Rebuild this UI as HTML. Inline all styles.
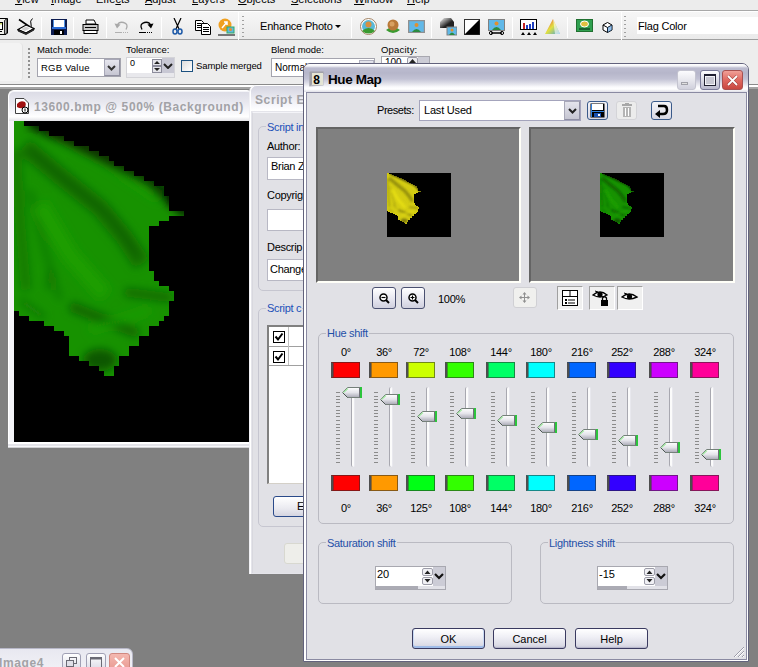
<!DOCTYPE html>
<html><head><meta charset="utf-8">
<style>
*{box-sizing:border-box;margin:0;padding:0}
html,body{width:758px;height:667px;overflow:hidden}
body{position:relative;background:#808080;font-family:"Liberation Sans",sans-serif;font-size:11px;color:#000}
.a{position:absolute}
.t{position:absolute;white-space:nowrap;line-height:13px}
/* top bars */
#menu{left:0;top:0;width:758px;height:11px;background:#ECECEC;border-bottom:1px solid #A8A8A8}
#tb1{left:0;top:11px;width:758px;height:29px;background:linear-gradient(#F6F6F6,#EAEAEA);border-top:1px solid #FFF;border-bottom:1px solid #A0A0A0}
#tb2{left:0;top:40px;width:758px;height:45px;background:#EDEDED;border-bottom:1px solid #8A8A8A}
#tb2b{left:0;top:85px;width:758px;height:4px;background:linear-gradient(#FFFFFF 0 2px,#A4A4A4 2px 4px)}
.sep{position:absolute;width:1px;background:#B8B8B8;border-right:1px solid #FFF}
.grip{position:absolute;width:2px;background:repeating-linear-gradient(#8A8A8A 0 2px,transparent 2px 4px)}
.sw{width:29px;height:16px;border:1px solid rgba(40,40,40,0.55);border-left:2px solid #4E4E4E;box-shadow:inset 1px 0 0 rgba(60,60,60,0.5)}
.tk{width:4px;height:71px}
.tr{width:4px;height:80px;background:#FBFBFB;border-left:1px solid #A8A8B0;border-right:1px solid #E8E8EE;border-radius:2px}
.btn{width:73px;height:21px;border:1px solid #3A3A60;border-radius:3px;background:linear-gradient(#FFFFFF,#F0F0F6 40%,#DCDCE6 85%,#C8C8D8);text-align:center;line-height:21px;font-size:11px;box-shadow:inset 0 -1px 0 #B8B8CC}
</style></head><body>

<!-- MENU -->
<div id="menu" class="a">
  <div class="t" style="left:15px;top:-7px;font-size:11px"><u>V</u>iew</div>
  <div class="t" style="left:51px;top:-7px;font-size:11px"><u>I</u>mage</div>
  <div class="t" style="left:96px;top:-7px;font-size:11px">Effe<u>c</u>ts</div>
  <div class="t" style="left:145px;top:-7px;font-size:11px"><u>A</u>djust</div>
  <div class="t" style="left:192px;top:-7px;font-size:11px"><u>L</u>ayers</div>
  <div class="t" style="left:238px;top:-7px;font-size:11px"><u>O</u>bjects</div>
  <div class="t" style="left:291px;top:-7px;font-size:11px"><u>S</u>elections</div>
  <div class="t" style="left:354px;top:-7px;font-size:11px"><u>W</u>indow</div>
  <div class="t" style="left:407px;top:-7px;font-size:11px"><u>H</u>elp</div>
</div>

<!-- TOOLBAR 1 -->
<div id="tb1" class="a">
  <!-- partial icon -->
  <svg class="a" style="left:0;top:6px" width="9" height="17"><path d="M-8 0.5 H7.5 V15 L6 16.5 H-8Z" fill="#F0F0EC" stroke="#000"/><path d="M4.5 2.5 L7 0.5 V15 L4.5 16.5Z" fill="#B0B0B0" stroke="#000" stroke-width="0.8"/><rect x="-6" y="4.5" width="8.5" height="7" fill="#fff" stroke="#000"/><rect x="-5" y="5" width="7" height="1.5" fill="#D0E070"/><path d="M-6 13.5 H2" stroke="#000"/></svg>
  <!-- scanner -->
  <svg class="a" style="left:17px;top:6px" width="18" height="17"><path d="M2 1.5 L13 9" stroke="#000" stroke-width="1.6"/><path d="M15.5 0.5 Q12.5 3 14 6 Q15 9 13 11" stroke="#000" fill="none"/><path d="M1 11.5 L9 7 L17 10.5 L9 15 Z" fill="#fff" stroke="#000" stroke-width="1.1"/><path d="M4 11 L9 8.5 L13 10.5 L8 13Z" fill="#D0D0D0"/><path d="M1 11.5 V13 L9 16.5 L17 12 V10.5 L9 15Z" fill="#404040" stroke="#000" stroke-width="0.8"/></svg>
  <div class="sep" style="left:41px;top:5px;height:21px"></div>
  <!-- floppy -->
  <svg class="a" style="left:51px;top:7px" width="16" height="16"><rect x="0" y="0" width="16" height="16" fill="#0C1C50"/><rect x="3" y="1" width="10" height="7" fill="#fff"/><rect x="2" y="1" width="1" height="7" fill="#5090E0"/><rect x="13" y="1" width="1" height="7" fill="#5090E0"/><rect x="1" y="8" width="14" height="2" fill="#2A6CD8"/><rect x="3" y="11" width="10" height="5" fill="#000"/><rect x="9" y="12" width="2" height="3" fill="#fff"/></svg>
  <div class="sep" style="left:73px;top:5px;height:21px"></div>
  <!-- printer -->
  <svg class="a" style="left:82px;top:7px" width="17" height="16"><path d="M4 1 L12 1 L14 5 L4 5 Z" fill="#fff" stroke="#000"/><rect x="1" y="5.5" width="15" height="6" fill="#C8C8C8" stroke="#000"/><rect x="2" y="11.5" width="13" height="3" fill="#fff" stroke="#000"/><rect x="3" y="8" width="11" height="1" fill="#000"/></svg>
  <div class="sep" style="left:106px;top:5px;height:21px"></div>
  <!-- undo disabled -->
  <svg class="a" style="left:114px;top:8px" width="16" height="14"><path d="M12 9.5 Q15 4 9.5 2.5 Q5 1.5 3.5 5" stroke="#A8A8A8" stroke-width="1.3" fill="none"/><path d="M0.5 3.5 L6.5 4.5 L3 8.5Z" fill="#A8A8A8"/><path d="M1 12.5 H8" stroke="#B0B0B0"/><path d="M9 12.5 H15" stroke="#B0B0B0" stroke-dasharray="1 1"/></svg>
  <!-- redo -->
  <svg class="a" style="left:138px;top:8px" width="16" height="14"><path d="M4 9.5 Q1 4 6.5 2.5 Q11 1.5 12.5 5" stroke="#000" stroke-width="1.3" fill="none"/><path d="M15.5 3.5 L9.5 4.5 L13 8.5Z" fill="#000"/><path d="M1 12.5 H8" stroke="#000"/><path d="M9 12.5 H15" stroke="#000" stroke-dasharray="1 1"/></svg>
  <div class="sep" style="left:161px;top:5px;height:21px"></div>
  <!-- scissors -->
  <svg class="a" style="left:172px;top:6px" width="11" height="17"><path d="M2 0 L7 11 M9 0 L4 11" stroke="#000" stroke-width="1.2"/><ellipse cx="3" cy="13.5" rx="2" ry="2.5" fill="none" stroke="#1E5AA8" stroke-width="1.5"/><ellipse cx="8" cy="13.5" rx="2" ry="2.5" fill="none" stroke="#1E5AA8" stroke-width="1.5"/></svg>
  <!-- copy -->
  <svg class="a" style="left:195px;top:8px" width="16" height="15"><path d="M0.5 0.5 H6.5 L8.5 2.5 V10.5 H0.5Z" fill="#fff" stroke="#000"/><path d="M2 3.5 H6 M2 5.5 H6 M2 7.5 H6" stroke="#000"/><path d="M6.5 3.5 H12.5 L15.5 6.5 V14.5 H6.5Z" fill="#fff" stroke="#000"/><path d="M8 7.5 H14 M8 9.5 H14 M8 11.5 H14" stroke="#000"/></svg>
  <!-- paste special -->
  <svg class="a" style="left:218px;top:6px" width="17" height="18"><circle cx="7" cy="7" r="6.5" fill="#F0A020"/><path d="M4 10 L9 4 M6 4 H9 V7" stroke="#fff" stroke-width="1.5" fill="none"/><rect x="9" y="9" width="7" height="6" fill="#60B8E0" stroke="#3A6"/><circle cx="12.5" cy="11.5" r="1.5" fill="#E09030"/><path d="M0 17 H17" stroke="#000"/></svg>
  <div class="sep" style="left:238px;top:0px;height:28px"></div>
  <div class="grip" style="left:242px;top:4px;height:22px;background:repeating-linear-gradient(#A0A0A0 0 1.5px,transparent 1.5px 4px)"></div>
  <div class="t" style="left:260px;top:8px;font-size:11px;letter-spacing:-0.2px">Enhance Photo</div>
  <svg class="a" style="left:335px;top:13px" width="6" height="4"><path d="M0 0 H6 L3 3 Z" fill="#000"/></svg>
  <div class="sep" style="left:351px;top:5px;height:21px"></div>
  <!-- person circle -->
  <svg class="a" style="left:360px;top:6px" width="17" height="17"><circle cx="8.5" cy="8.5" r="8" fill="#fff" stroke="#A08060"/><circle cx="8.5" cy="8.5" r="6.5" fill="#58B8D8"/><path d="M2 13 Q8.5 7 15 13 Q8.5 18 2 13Z" fill="#3A9A30"/><circle cx="8.5" cy="6.5" r="3" fill="#D89040"/></svg>
  <!-- orange ball -->
  <svg class="a" style="left:385px;top:6px" width="16" height="17"><path d="M1 12 Q8 6 15 12 Q8 18 1 12Z" fill="#3A9A30"/><circle cx="8" cy="7" r="5.5" fill="#B87838"/><circle cx="7" cy="6" r="2.5" fill="#D8A060"/></svg>
  <!-- photo -->
  <svg class="a" style="left:408px;top:8px" width="17" height="13"><rect x="0.5" y="0.5" width="16" height="12" fill="#60B8E8" stroke="#909090" stroke-width="1.5"/><circle cx="8.5" cy="5" r="2" fill="#E09030"/><path d="M4 12 Q8.5 6 13 12Z" fill="#2A8A40"/></svg>
  <div class="sep" style="left:431px;top:5px;height:21px"></div>
  <!-- gradient + photo -->
  <svg class="a" style="left:440px;top:6px" width="17" height="18"><defs><linearGradient id="g1" x1="0" y1="0" x2="1" y2="1"><stop offset="0" stop-color="#fff"/><stop offset="0.6" stop-color="#222"/></linearGradient></defs><path d="M0 4 L4 0 L11 0 L14 4 L14 10 L0 10Z" fill="url(#g1)"/><rect x="7" y="9" width="10" height="8" fill="#60B8E8" stroke="#808080"/><circle cx="12" cy="12" r="1.5" fill="#E09030"/><path d="M9 17 Q12 12 15 17Z" fill="#2A8A40"/></svg>
  <!-- BW square -->
  <svg class="a" style="left:464px;top:7px" width="16" height="16"><rect x="0.5" y="0.5" width="15" height="15" fill="#fff" stroke="#333"/><path d="M15.5 0.5 V15.5 H0.5Z" fill="#000"/></svg>
  <!-- photo tool -->
  <svg class="a" style="left:488px;top:7px" width="17" height="17"><rect x="0.5" y="0.5" width="16" height="11" fill="#60B8E8" stroke="#808080"/><circle cx="8.5" cy="4.5" r="2" fill="#E09030"/><path d="M4 11 Q8.5 5 13 11Z" fill="#2A8A40"/><path d="M3 14 H14" stroke="#000" stroke-width="1.5"/><circle cx="3" cy="14" r="1.6" fill="none" stroke="#000"/><circle cx="14" cy="14" r="1.6" fill="none" stroke="#000"/></svg>
  <div class="sep" style="left:512px;top:5px;height:21px"></div>
  <!-- histogram -->
  <svg class="a" style="left:520px;top:7px" width="17" height="16"><rect x="0.5" y="0.5" width="16" height="10" fill="#fff" stroke="#000"/><rect x="3" y="4" width="2" height="6" fill="#C02020"/><rect x="6" y="6" width="2" height="4" fill="#2040C0"/><rect x="9" y="5" width="2" height="5" fill="#2040C0"/><rect x="12" y="3" width="2" height="7" fill="#2040C0"/><path d="M1 16 L3 13 L5 16Z M7 16 L9 13 L11 16Z M13 16 L15 13 L17 16Z" fill="#000"/></svg>
  <!-- color triangle -->
  <svg class="a" style="left:545px;top:7px" width="15" height="16"><defs><linearGradient id="g2" x1="0" y1="0" x2="1" y2="1"><stop offset="0" stop-color="#F04040"/><stop offset="0.5" stop-color="#E0E040"/><stop offset="1" stop-color="#40A0E0"/></linearGradient></defs><path d="M8 0 L15 15 L0 15Z" fill="url(#g2)"/><path d="M8 0 L10 15 L15 15Z" fill="#fff" opacity="0.6"/></svg>
  <div class="sep" style="left:567px;top:5px;height:21px"></div>
  <!-- green photo -->
  <svg class="a" style="left:576px;top:7px" width="17" height="13"><rect x="0.5" y="0.5" width="16" height="12" fill="#30A050" stroke="#207030"/><ellipse cx="8.5" cy="5" rx="4" ry="3" fill="#E0C040" stroke="#fff"/><rect x="3" y="9" width="11" height="2" fill="#186030"/></svg>
  <!-- cube -->
  <svg class="a" style="left:602px;top:10px" width="11" height="11"><path d="M1 3 L5.5 0.5 L10 3 L10 8 L5.5 10.5 L1 8Z" fill="#fff" stroke="#000"/><path d="M1 3 L5.5 5.5 L10 3 M5.5 5.5 V10.5" stroke="#000" fill="none"/><path d="M5.5 5.5 L10 3 L10 8 L5.5 10.5Z" fill="#3080D0" opacity="0.5"/></svg>
  <div class="sep" style="left:621px;top:0px;height:28px"></div>
  <div class="grip" style="left:624px;top:4px;height:22px;background:repeating-linear-gradient(#A0A0A0 0 1.5px,transparent 1.5px 4px)"></div>
  <div class="a" style="left:637px;top:5px;width:121px;height:17px;background:#fff"></div>
  <div class="t" style="left:638px;top:8px;font-size:11px;letter-spacing:-0.2px">Flag Color</div>
</div>
<!-- TOOLBAR 2 -->
<div id="tb2" class="a">
  <div class="a" style="left:0;top:3px;width:23px;height:38px;background:#F3F3F3;border-radius:0 4px 4px 0;border-right:1px solid #E2E2E2"></div>
  <div class="grip" style="left:28px;top:8px;height:30px;width:2px;background:repeating-linear-gradient(#909090 0 2px,transparent 2px 4px)"></div>
  <div class="t" style="left:37px;top:3px;font-size:9.5px;letter-spacing:-0.05px">Match mode:</div>
  <div class="a" style="left:37px;top:18px;width:84px;height:19px;background:#fff;border:1px solid #A4A4AE"></div>
  <div class="t" style="left:41px;top:21px;font-size:9.5px;letter-spacing:0.2px">RGB Value</div>
  <div class="a" style="left:104px;top:19px;width:16px;height:17px;background:linear-gradient(#E6E6EE,#C6C6D2);border:1px solid #A8A8B8;border-right-color:#9090A0;border-bottom-color:#9090A0"></div>
  <svg class="a" style="left:107px;top:25px" width="9" height="6"><path d="M1 1 L4.5 4.5 L8 1" stroke="#333" stroke-width="2" fill="none"/></svg>
  <div class="t" style="left:126px;top:3px;font-size:9.5px;letter-spacing:-0.05px">Tolerance:</div>
  <div class="a" style="left:126px;top:17px;width:49px;height:21px;background:#D4D4D8"></div>
  <div class="a" style="left:127px;top:18px;width:25px;height:15px;background:#fff"></div>
  <div class="t" style="left:130px;top:17px;font-size:9px">0</div>
  <div class="a" style="left:152px;top:18px;width:10px;height:15px;background:#fff"></div>
  <svg class="a" style="left:152px;top:19px" width="10" height="14"><rect x="0.5" y="0.5" width="9" height="6" fill="#E4E4EA" stroke="#8C8C9C"/><rect x="0.5" y="7.5" width="9" height="6" fill="#E4E4EA" stroke="#8C8C9C"/><path d="M2 5 L5 2 L8 5Z M2 9 L5 12 L8 9Z" fill="#222"/></svg>
  <div class="a" style="left:162px;top:18px;width:12px;height:15px;background:#C8C8D4"></div>
  <svg class="a" style="left:163px;top:23px" width="10" height="6"><path d="M1 1 L5 5 L9 1" stroke="#222" stroke-width="2" fill="none"/></svg>
  <div class="a" style="left:127px;top:33px;width:47px;height:4px;background:#E8E8EC"></div>
  <div class="a" style="left:181px;top:20px;width:12px;height:12px;background:linear-gradient(135deg,#DCDCDC,#fff);border:1px solid #1C5180"></div>
  <div class="t" style="left:196px;top:19px;font-size:9.5px;letter-spacing:-0.1px">Sample merged</div>
  <div class="t" style="left:271px;top:3px;font-size:9.5px;letter-spacing:-0.05px">Blend mode:</div>
  <div class="a" style="left:271px;top:18px;width:104px;height:19px;background:#fff;border:1px solid #A4A4AE"></div>
  <div class="a" style="left:359px;top:20px;width:15px;height:15px;background:linear-gradient(#E4E4EC,#C8C8D4);border:1px solid #B0B0C0"></div>
  <div class="t" style="left:275px;top:21px;font-size:10px">Normal</div>
  <div class="t" style="left:381px;top:3px;font-size:9.5px;letter-spacing:0.2px">Opacity:</div>
  <div class="a" style="left:381px;top:16px;width:49px;height:22px;background:#fff;border:1px solid #A8A8B0"></div>
  <div class="a" style="left:407px;top:17px;width:11px;height:8px;background:#ECECF0;border:1px solid #9C9CA8;border-radius:2px"></div>
  <svg class="a" style="left:409px;top:19px" width="7" height="4"><path d="M0 4 L3.5 0 L7 4Z" fill="#222"/></svg>
  <div class="a" style="left:418px;top:17px;width:11px;height:20px;background:#CCCCD6"></div>
  <div class="t" style="left:385px;top:16px;font-size:10px">100</div>
</div>

<div id="tb2b" class="a"></div>
<!-- MDI content -->
<!-- image window -->
<div class="a" style="left:8px;top:90px;width:245px;height:358px;background:#F4F4F8;border-radius:6px 6px 0 0;border-left:1px solid #fff;border-top:1px solid #fff"></div>
<div class="a" style="left:9px;top:92px;width:244px;height:29px;background:linear-gradient(#DCDCE6 0%,#E8E8EF 35%,#F6F6FA 65%,#FFFFFF 85%,#E4E4E8 100%);border-radius:5px 5px 0 0"></div>
<svg class="a" style="left:15px;top:98px" width="14" height="16"><path d="M0.5 0.5 H9 L13.5 5 V15.5 H0.5Z" fill="#fff" stroke="#404040"/><path d="M2 6 Q5 2 10 4 Q12 7 9 10 Q5 11 2 9Z" fill="#A01010"/><circle cx="10" cy="12" r="3" fill="#fff" stroke="#000"/><path d="M10 10.5 V13.5" stroke="#000"/></svg>
<div class="t" style="left:34px;top:101px;font-size:12px;font-weight:bold;color:#A2A2A6;letter-spacing:0.6px">13600.bmp @ 500% (Background)</div>
<div class="a" style="left:14px;top:121px;width:235px;height:321px;background:#000;overflow:hidden">
  <svg width="235" height="321" viewBox="14 121 235 321" style="position:absolute;left:0;top:0">
    <defs>
      <filter id="bl" x="-20%" y="-20%" width="140%" height="140%"><feGaussianBlur stdDeviation="4.5"/></filter>
      <clipPath id="flagclip"><path id="flagpath" d="M14 121 H24 V126 H39 V131 H49 V136 H64 V141 H74 V146 H89 V151 H99 V156 H109 V161 H114 V166 H124 V171 H134 V176 H144 V181 H154 V186 H164 V196 H169 V211 H184 V216 H169 V221 H159 V226 H149 V271 H154 V281 H159 V286 H169 V291 H174 V301 H169 V316 H164 V321 H159 V326 H149 V336 H139 V346 H129 V356 H119 V366 H114 V376 H104 V371 H99 V366 H89 V361 H79 V356 H69 V336 H64 V331 H54 V326 H44 V321 H29 V316 H19 V311 H14 Z"/></clipPath>
    </defs>
    <g id="flaggrp" clip-path="url(#flagclip)">
      <rect x="14" y="121" width="175" height="260" fill="#179200"/>
      <g filter="url(#bl)">
        <path d="M45 128 L110 162 L160 196" stroke="#1EA200" stroke-width="12" fill="none"/>
        <path d="M30 121 L64 136 L100 154 L150 180 L168 196 L190 214" stroke="#000" stroke-width="14" fill="none" opacity="0.75"/>
        <path d="M24 146 L60 176 L100 208 L125 238 L142 264" stroke="#0B6000" stroke-width="18" fill="none" opacity="0.7"/>
        <path d="M30 150 L70 184 L110 216 L138 255" stroke="#0A5800" stroke-width="6" fill="none" opacity="0.6"/>
        <path d="M16 150 L20 220 L26 290" stroke="#0E6C00" stroke-width="10" fill="none" opacity="0.65"/>
        <path d="M30 190 L45 250 L60 300" stroke="#0E6800" stroke-width="6" fill="none" opacity="0.5"/>
        <path d="M40 205 L70 255 L105 295" stroke="#1C9E00" stroke-width="16" fill="none"/>
        <path d="M50 270 L48 290" stroke="#0E6400" stroke-width="4" fill="none" opacity="0.7"/>
        <path d="M70 306 L105 320 L138 334" stroke="#0B5E00" stroke-width="10" fill="none" opacity="0.85"/>
        <path d="M125 292 L172 298" stroke="#0B6000" stroke-width="9" fill="none" opacity="0.8"/>
        <ellipse cx="100" cy="360" rx="17" ry="11" fill="#0A5600"/>
        <path d="M20 300 L45 318" stroke="#0E680C" stroke-width="6" fill="none" opacity="0.6"/>
        <path d="M90 330 L150 310" stroke="#1EA000" stroke-width="8" fill="none" opacity="0.7"/>
      </g>
    </g>
  </svg>
</div>
<div class="a" style="left:8px;top:442px;width:245px;height:6px;background:linear-gradient(#fff 0 2px,#E4E4EA 2px 4px,#F8F8FA 4px 5px,#D0D0D4 5px)"></div>

<!-- Script Editor (behind) -->
<div class="a" style="left:250px;top:85px;width:60px;height:489px;background:#E4E4EA;border-radius:7px 0 0 0;border-left:1px solid #fff;border-top:1px solid #fff;box-shadow:-1px 0 0 #F0F0F4"></div>
<div class="a" style="left:251px;top:86px;width:59px;height:25px;background:linear-gradient(#D4D4E0 0%,#E6E6EE 40%,#F8F8FC 80%,#fff 100%);border-radius:6px 0 0 0"></div>
<div class="t" style="left:255px;top:94px;font-size:12px;font-weight:bold;color:#A2A2A6;letter-spacing:0.6px">Script E</div>
<div class="a" style="left:252px;top:112px;width:58px;height:461px;background:#E1E1E6;border-left:1px solid #D8D8DE;border-top:1px solid #F4F4F8"></div>
<div class="a" style="left:258px;top:126px;width:60px;height:165px;border:1px solid #C6C6D0;border-radius:5px"></div>
<div class="t" style="left:266px;top:121px;background:#E1E1E6;color:#1C50B8;padding:0 1px;letter-spacing:-0.3px">Script in</div>
<div class="t" style="left:267px;top:140px;letter-spacing:-0.3px">Author:</div>
<div class="a" style="left:267px;top:157px;width:50px;height:23px;background:#fff;border:1px solid #B8B8C4"></div>
<div class="t" style="left:271px;top:160px;letter-spacing:-0.3px">Brian Z</div>
<div class="t" style="left:267px;top:189px;letter-spacing:-0.3px">Copyrig</div>
<div class="a" style="left:267px;top:209px;width:50px;height:22px;background:#fff;border:1px solid #B8B8C4"></div>
<div class="t" style="left:267px;top:241px;letter-spacing:-0.3px">Descrip</div>
<div class="a" style="left:267px;top:259px;width:50px;height:22px;background:#fff;border:1px solid #B8B8C4"></div>
<div class="t" style="left:270px;top:263px;letter-spacing:-0.3px">Change</div>
<div class="a" style="left:258px;top:308px;width:60px;height:219px;border:1px solid #C6C6D0;border-radius:5px"></div>
<div class="t" style="left:266px;top:302px;background:#E1E1E6;color:#1C50B8;padding:0 1px;letter-spacing:-0.3px">Script c</div>
<div class="a" style="left:267px;top:325px;width:50px;height:159px;background:#fff;border-top:2px solid #808080;border-left:2px solid #808080;border-bottom:1px solid #D4D0C8"></div>
<div class="a" style="left:269px;top:346px;width:48px;height:1px;background:#A0A0A0"></div>
<div class="a" style="left:269px;top:365px;width:48px;height:1px;background:#A0A0A0"></div>
<div class="a" style="left:288px;top:327px;width:1px;height:38px;background:#C0C0C0"></div>
<svg class="a" style="left:273px;top:331px" width="12" height="12"><rect x="0.5" y="0.5" width="11" height="11" fill="#fff" stroke="#000"/><path d="M2.5 5.5 L5 8.5 L9.5 2.5" stroke="#000" stroke-width="2" fill="none"/></svg>
<svg class="a" style="left:273px;top:351px" width="12" height="12"><rect x="0.5" y="0.5" width="11" height="11" fill="#fff" stroke="#000"/><path d="M2.5 5.5 L5 8.5 L9.5 2.5" stroke="#000" stroke-width="2" fill="none"/></svg>
<div class="a" style="left:273px;top:496px;width:40px;height:21px;background:linear-gradient(#fff,#EAEAF0 60%,#D4D4E0);border:1px solid #2A4A8A;border-radius:3px"></div>
<div class="t" style="left:297px;top:500px">E</div>
<div class="a" style="left:284px;top:543px;width:30px;height:21px;background:#EEEEEA;border:1px solid #D8D8D0;border-radius:3px"></div>

<!-- Image4 minimized -->
<div class="a" style="left:-10px;top:648px;width:143px;height:30px;background:linear-gradient(#E8E8F0,#F4F4F8);border-radius:6px 6px 0 0;border:1px solid #B8B8C8"></div>
<div class="t" style="left:-1px;top:657px;font-size:12px;font-weight:bold;color:#A2A2A6;letter-spacing:0.6px">Image4</div>
<div class="a" style="left:62px;top:653px;width:19px;height:19px;background:linear-gradient(#fff,#D8D8E4);border:1px solid #A0A0B4;border-radius:3px"></div>
<svg class="a" style="left:66px;top:657px" width="11" height="10"><rect x="3.5" y="0.5" width="7" height="6" fill="none" stroke="#6A6A74"/><rect x="0.5" y="3.5" width="7" height="6" fill="#E0E0E8" stroke="#6A6A74"/></svg>
<div class="a" style="left:86px;top:653px;width:20px;height:19px;background:linear-gradient(#fff,#D8D8E4);border:1px solid #A0A0B4;border-radius:3px"></div>
<svg class="a" style="left:90px;top:657px" width="12" height="12"><rect x="0.5" y="0.5" width="11" height="11" fill="none" stroke="#6A6A74"/><rect x="0.5" y="0.5" width="11" height="2" fill="#6A6A74"/></svg>
<div class="a" style="left:109px;top:653px;width:21px;height:19px;background:linear-gradient(#F4B8B0,#E89890);border:1px solid #D08880;border-radius:3px"></div>
<svg class="a" style="left:113px;top:656px" width="13" height="13"><path d="M2 2 L11 11 M11 2 L2 11" stroke="#fff" stroke-width="2"/></svg>

<!-- HUE MAP -->
<div class="a" style="left:303px;top:63px;width:446px;height:599px;background:#F4F4F8;border:1px solid #62627C;border-radius:7px 7px 0 0"></div>
<div class="a" style="left:304px;top:64px;width:444px;height:28px;border-radius:6px 6px 0 0;background:linear-gradient(#FFFFFF 0px,#F4F4F8 2px,#BCBCD0 4px,#B6B6CA 9px,#C2C2D4 15px,#E4E4EC 20px,#FAFAFC 23px,#FFFFFF 25px,#E0E0E8 28px)"></div>
<div class="a" style="left:304px;top:92px;width:444px;height:569px;border:1px solid #fff;border-left:2px solid #fff;border-top:0"></div>
<div class="a" style="left:306px;top:92px;width:441px;height:568px;border:1px solid #8A8AA2;background:#E1E1E6"></div>
<!-- title icon -->
<svg class="a" style="left:309px;top:71px" width="16" height="16"><path d="M0.5 15.5 V1.5 Q0.5 0.5 1.5 0.5 H14.5 V14.5Z" fill="#B8B8C0"/><path d="M0.5 15.5 L3 13 V3 H14.5 V0.5 H1.5 Q0.5 0.5 0.5 1.5Z" fill="#A0A0A8"/><rect x="3" y="2" width="11" height="12" fill="#E4E4D4"/><text x="4.2" y="12.5" font-family="Liberation Sans" font-weight="bold" font-size="12" fill="#000">8</text></svg>
<div class="t" style="left:328px;top:72px;font-size:13.5px;font-weight:bold;letter-spacing:-0.4px;line-height:16px">Hue Map</div>
<!-- title buttons -->
<div class="a" style="left:677px;top:70px;width:19px;height:20px;border:1px solid #C4C4D0;border-radius:3px;background:linear-gradient(#FCFCFE,#E8E8EE 50%,#D0D0DC)"></div>
<div class="a" style="left:681px;top:82px;width:7px;height:3px;border:1px solid #A0A0A8;background:#E0E0E0"></div>
<div class="a" style="left:700px;top:70px;width:20px;height:20px;border:1px solid #7A7A98;border-radius:3px;background:linear-gradient(#FFFFFF,#DCDCE6 50%,#B8B8CC)"></div>
<div class="a" style="left:704px;top:74px;width:12px;height:12px;border:1px solid #202030;border-top-width:2px;background:#C8C8D2;box-shadow:inset 0 0 0 1px #F4F4F8"></div>
<div class="a" style="left:722px;top:70px;width:21px;height:20px;border:1px solid #A85050;border-radius:3px;background:linear-gradient(#F0A098,#E06860 50%,#C84840)"></div>
<svg class="a" style="left:726px;top:74px" width="13" height="13"><path d="M2 2 L11 11 M11 2 L2 11" stroke="#6A2020" stroke-width="3" opacity="0.6"/><path d="M2 2 L11 11 M11 2 L2 11" stroke="#fff" stroke-width="1.8"/></svg>

<!-- presets row -->
<div class="t" style="left:377px;top:104px;letter-spacing:-0.45px">Presets:</div>
<div class="a" style="left:419px;top:100px;width:162px;height:21px;background:#fff;border:1px solid #A4A4BC"></div>
<div class="t" style="left:424px;top:104px;letter-spacing:-0.2px">Last Used</div>
<div class="a" style="left:564px;top:101px;width:16px;height:19px;background:linear-gradient(#E4E4EC,#C6C6D2);border:1px solid #A8A8B8;border-right-color:#9090A4;border-bottom-color:#9090A4"></div>
<svg class="a" style="left:568px;top:108px" width="9" height="6"><path d="M1 1 L4.5 4.5 L8 1" stroke="#222" stroke-width="2" fill="none"/></svg>
<div class="a" style="left:587px;top:101px;width:21px;height:19px;border:1px solid #3A5A8A;border-radius:3px;background:linear-gradient(#F4F4F8,#D8D8E4)"></div>
<svg class="a" style="left:590px;top:103px" width="15" height="15"><rect x="0.5" y="0.5" width="14" height="14" fill="#000"/><rect x="2" y="1" width="11" height="6" fill="#fff"/><rect x="1" y="8" width="13" height="1" fill="#3080E0"/><rect x="1" y="1" width="1" height="13" fill="#3080E0"/><rect x="4" y="10" width="7" height="4" fill="#1850B0"/><rect x="8" y="11" width="2" height="2" fill="#fff"/></svg>
<div class="a" style="left:616px;top:101px;width:21px;height:19px;border:1px solid #D4D4D8;border-radius:3px;background:#ECECEC"></div>
<svg class="a" style="left:621px;top:103px" width="12" height="15"><rect x="1" y="1" width="10" height="2" fill="#A8A8A8"/><rect x="4" y="0" width="4" height="1" fill="#A8A8A8"/><rect x="2" y="4" width="8" height="10" fill="#B4B4B4"/><rect x="4" y="5" width="1" height="8" fill="#fff"/><rect x="7" y="5" width="1" height="8" fill="#fff"/></svg>
<div class="a" style="left:651px;top:101px;width:21px;height:19px;border:1px solid #3A5A8A;border-radius:3px;background:linear-gradient(#F4F4F8,#D8D8E4)"></div>
<svg class="a" style="left:654px;top:103px" width="15" height="15"><path d="M4 3 H10 Q13 3 13 7 Q13 11 9 11 H5" stroke="#000" stroke-width="2.5" fill="none"/><path d="M1 11 L6 7 L6 15Z" fill="#000"/></svg>

<!-- previews -->
<div class="a" style="left:316px;top:127px;width:205px;height:156px;background:#808080;border-top:2px solid #646464;border-left:2px solid #646464;border-right:2px solid #FFFFF8;border-bottom:2px solid #FFFFF8"></div>
<div class="a" style="left:529px;top:127px;width:206px;height:156px;background:#808080;border-top:2px solid #646464;border-left:2px solid #646464;border-right:2px solid #FFFFF8;border-bottom:2px solid #FFFFF8"></div>
<div class="a" style="left:387px;top:173px;width:64px;height:64px;background:#000;overflow:hidden">
  <svg width="64" height="64" viewBox="14 121 320 320" style="position:absolute;left:0;top:0">
    <defs><filter id="toyel" color-interpolation-filters="sRGB"><feColorMatrix type="matrix" values="0 1.45 0 0 0  0 1.4 0 0 0  0 0.12 0 0 0  0 0 0 1 0"/></filter></defs><g filter="url(#toyel)"><use href="#flaggrp"/></g>
  </svg>
</div>
<div class="a" style="left:600px;top:173px;width:64px;height:64px;background:#000;overflow:hidden">
  <svg width="64" height="64" viewBox="14 121 320 320" style="position:absolute;left:0;top:0">
    <use href="#flaggrp"/>
  </svg>
</div>
<!-- preview buttons -->
<div class="a" style="left:372px;top:287px;width:24px;height:22px;border:1px solid #4A5070;border-radius:3px;background:linear-gradient(#FFFFFF,#E4E4EE 60%,#D0D0DE)"></div>
<svg class="a" style="left:379px;top:293px" width="11" height="11"><circle cx="4.5" cy="4.5" r="3.5" fill="#fff" stroke="#000" stroke-width="1.5"/><path d="M2.5 4.5 H6.5" stroke="#000" stroke-width="1.2"/><path d="M7 7 L10 10" stroke="#000" stroke-width="2"/></svg>
<div class="a" style="left:401px;top:287px;width:24px;height:22px;border:1px solid #4A5070;border-radius:3px;background:linear-gradient(#FFFFFF,#E4E4EE 60%,#D0D0DE)"></div>
<svg class="a" style="left:408px;top:293px" width="11" height="11"><circle cx="4.5" cy="4.5" r="3.5" fill="#fff" stroke="#000" stroke-width="1.5"/><path d="M2.5 4.5 H6.5 M4.5 2.5 V6.5" stroke="#000" stroke-width="1.2"/><path d="M7 7 L10 10" stroke="#000" stroke-width="2"/></svg>
<div class="t" style="left:438px;top:293px;letter-spacing:-0.3px">100%</div>
<div class="a" style="left:513px;top:287px;width:24px;height:21px;border:1px solid #D0D0D4;border-radius:3px;background:#F0F0EE"></div>
<svg class="a" style="left:519px;top:292px" width="11" height="11"><path d="M5.5 1 V10 M1 5.5 H10" stroke="#909090"/><path d="M5.5 0 L3.5 2.5 H7.5Z M5.5 11 L3.5 8.5 H7.5Z M0 5.5 L2.5 3.5 V7.5Z M11 5.5 L8.5 3.5 V7.5Z" fill="#909090"/></svg>
<div class="a" style="left:557px;top:286px;width:26px;height:24px;border:1px solid #fff;border-top-color:#A0A0A0;border-left-color:#A0A0A0;background:#F0F0F0"></div>
<svg class="a" style="left:562px;top:290px" width="16" height="16"><rect x="0.5" y="0.5" width="15" height="15" fill="#fff" stroke="#000"/><path d="M0.5 6.5 H15.5 M8 0.5 V6.5" stroke="#000"/><rect x="3" y="9" width="2" height="2" fill="#000"/><rect x="3" y="12" width="2" height="2" fill="#000"/><path d="M6 10 H13 M6 13 H13" stroke="#000"/></svg>
<div class="a" style="left:589px;top:286px;width:26px;height:24px;border:1px solid #fff;border-top-color:#A0A0A0;border-left-color:#A0A0A0;background:#F0F0F0"></div>
<svg class="a" style="left:592px;top:290px" width="20" height="17"><path d="M1 5 Q8 -1 15 5 Q8 9 1 5Z" fill="#fff" stroke="#000" stroke-width="1.4"/><circle cx="8" cy="4.5" r="2.6" fill="#000"/><path d="M3 1 L6 2" stroke="#000"/><rect x="9" y="10" width="7" height="6" fill="#000"/><path d="M10.5 10 V8 Q12.5 5.5 14.5 8 V10" stroke="#000" stroke-width="1.3" fill="none"/></svg>
<div class="a" style="left:617px;top:286px;width:26px;height:24px;border:1px solid #fff;border-top-color:#A0A0A0;border-left-color:#A0A0A0;background:#F0F0F0"></div>
<svg class="a" style="left:621px;top:292px" width="18" height="10"><path d="M1 5 Q8 -1 16 5 Q8 9 1 5Z" fill="#fff" stroke="#000" stroke-width="1.4"/><circle cx="8.5" cy="4.5" r="2.6" fill="#000"/><path d="M3 1 L6 2" stroke="#000"/></svg>

<!-- HUE SHIFT GROUP -->
<div class="a" style="left:318px;top:333px;width:416px;height:191px;border:1px solid #BABAC2;border-radius:5px"></div>
<div class="t" style="left:326px;top:327px;padding:0 1px;background:#E1E1E6;color:#1F50A8;letter-spacing:-0.3px">Hue shift</div>
<div class="t" style="left:325px;top:346px;width:42px;text-align:center;letter-spacing:-0.3px">0°</div>
<div class="a sw" style="left:331px;top:362px;background:#FF0000"></div>
<svg class="a tk" style="left:336px;top:392px" width="4" height="71"><use href="#ticks"/></svg>
<div class="a tr" style="left:351px;top:387px"></div>
<svg class="a" style="left:342px;top:387px" width="20" height="11"><use href="#thumb"/></svg>
<div class="a sw" style="left:331px;top:475px;background:#FF0000"></div>
<div class="t" style="left:325px;top:502px;width:42px;text-align:center;letter-spacing:-0.3px">0°</div>
<div class="t" style="left:363px;top:346px;width:42px;text-align:center;letter-spacing:-0.3px">36°</div>
<div class="a sw" style="left:369px;top:362px;background:#FF9900"></div>
<svg class="a tk" style="left:374px;top:392px" width="4" height="71"><use href="#ticks"/></svg>
<div class="a tr" style="left:389px;top:387px"></div>
<svg class="a" style="left:380px;top:394px" width="20" height="11"><use href="#thumb"/></svg>
<div class="a sw" style="left:369px;top:475px;background:#FF9900"></div>
<div class="t" style="left:363px;top:502px;width:42px;text-align:center;letter-spacing:-0.3px">36°</div>
<div class="t" style="left:400px;top:346px;width:42px;text-align:center;letter-spacing:-0.3px">72°</div>
<div class="a sw" style="left:406px;top:362px;background:#CCFF00"></div>
<svg class="a tk" style="left:411px;top:392px" width="4" height="71"><use href="#ticks"/></svg>
<div class="a tr" style="left:426px;top:387px"></div>
<svg class="a" style="left:417px;top:411px" width="20" height="11"><use href="#thumb"/></svg>
<div class="a sw" style="left:406px;top:475px;background:#00FF15"></div>
<div class="t" style="left:400px;top:502px;width:42px;text-align:center;letter-spacing:-0.3px">125°</div>
<div class="t" style="left:439px;top:346px;width:42px;text-align:center;letter-spacing:-0.3px">108°</div>
<div class="a sw" style="left:445px;top:362px;background:#33FF00"></div>
<svg class="a tk" style="left:450px;top:392px" width="4" height="71"><use href="#ticks"/></svg>
<div class="a tr" style="left:465px;top:387px"></div>
<svg class="a" style="left:456px;top:408px" width="20" height="11"><use href="#thumb"/></svg>
<div class="a sw" style="left:445px;top:475px;background:#33FF00"></div>
<div class="t" style="left:439px;top:502px;width:42px;text-align:center;letter-spacing:-0.3px">108°</div>
<div class="t" style="left:480px;top:346px;width:42px;text-align:center;letter-spacing:-0.3px">144°</div>
<div class="a sw" style="left:486px;top:362px;background:#00FF66"></div>
<svg class="a tk" style="left:491px;top:392px" width="4" height="71"><use href="#ticks"/></svg>
<div class="a tr" style="left:506px;top:387px"></div>
<svg class="a" style="left:497px;top:415px" width="20" height="11"><use href="#thumb"/></svg>
<div class="a sw" style="left:486px;top:475px;background:#00FF66"></div>
<div class="t" style="left:480px;top:502px;width:42px;text-align:center;letter-spacing:-0.3px">144°</div>
<div class="t" style="left:520px;top:346px;width:42px;text-align:center;letter-spacing:-0.3px">180°</div>
<div class="a sw" style="left:526px;top:362px;background:#00FFFF"></div>
<svg class="a tk" style="left:531px;top:392px" width="4" height="71"><use href="#ticks"/></svg>
<div class="a tr" style="left:546px;top:387px"></div>
<svg class="a" style="left:537px;top:422px" width="20" height="11"><use href="#thumb"/></svg>
<div class="a sw" style="left:526px;top:475px;background:#00FFFF"></div>
<div class="t" style="left:520px;top:502px;width:42px;text-align:center;letter-spacing:-0.3px">180°</div>
<div class="t" style="left:561px;top:346px;width:42px;text-align:center;letter-spacing:-0.3px">216°</div>
<div class="a sw" style="left:567px;top:362px;background:#0066FF"></div>
<svg class="a tk" style="left:572px;top:392px" width="4" height="71"><use href="#ticks"/></svg>
<div class="a tr" style="left:587px;top:387px"></div>
<svg class="a" style="left:578px;top:429px" width="20" height="11"><use href="#thumb"/></svg>
<div class="a sw" style="left:567px;top:475px;background:#0066FF"></div>
<div class="t" style="left:561px;top:502px;width:42px;text-align:center;letter-spacing:-0.3px">216°</div>
<div class="t" style="left:601px;top:346px;width:42px;text-align:center;letter-spacing:-0.3px">252°</div>
<div class="a sw" style="left:607px;top:362px;background:#3300FF"></div>
<svg class="a tk" style="left:612px;top:392px" width="4" height="71"><use href="#ticks"/></svg>
<div class="a tr" style="left:627px;top:387px"></div>
<svg class="a" style="left:618px;top:435px" width="20" height="11"><use href="#thumb"/></svg>
<div class="a sw" style="left:607px;top:475px;background:#3300FF"></div>
<div class="t" style="left:601px;top:502px;width:42px;text-align:center;letter-spacing:-0.3px">252°</div>
<div class="t" style="left:643px;top:346px;width:42px;text-align:center;letter-spacing:-0.3px">288°</div>
<div class="a sw" style="left:649px;top:362px;background:#CC00FF"></div>
<svg class="a tk" style="left:654px;top:392px" width="4" height="71"><use href="#ticks"/></svg>
<div class="a tr" style="left:669px;top:387px"></div>
<svg class="a" style="left:660px;top:442px" width="20" height="11"><use href="#thumb"/></svg>
<div class="a sw" style="left:649px;top:475px;background:#CC00FF"></div>
<div class="t" style="left:643px;top:502px;width:42px;text-align:center;letter-spacing:-0.3px">288°</div>
<div class="t" style="left:684px;top:346px;width:42px;text-align:center;letter-spacing:-0.3px">324°</div>
<div class="a sw" style="left:690px;top:362px;background:#FF0099"></div>
<svg class="a tk" style="left:695px;top:392px" width="4" height="71"><use href="#ticks"/></svg>
<div class="a tr" style="left:710px;top:387px"></div>
<svg class="a" style="left:701px;top:449px" width="20" height="11"><use href="#thumb"/></svg>
<div class="a sw" style="left:690px;top:475px;background:#FF0099"></div>
<div class="t" style="left:684px;top:502px;width:42px;text-align:center;letter-spacing:-0.3px">324°</div>
<svg width="0" height="0" style="position:absolute"><defs>
<linearGradient id="thg" x1="0" y1="0" x2="0" y2="1"><stop offset="0" stop-color="#FFFFFF"/><stop offset="0.5" stop-color="#E4E4EA"/><stop offset="1" stop-color="#A8A8B4"/></linearGradient>
<g id="ticks" fill="#8A8A8A"><rect x="0" y="0" width="4" height="1"/><rect x="0" y="4" width="4" height="1"/><rect x="0" y="7" width="4" height="1"/><rect x="0" y="10" width="4" height="1"/><rect x="0" y="14" width="4" height="1"/><rect x="0" y="18" width="4" height="1"/><rect x="0" y="21" width="4" height="1"/><rect x="0" y="24" width="4" height="1"/><rect x="0" y="28" width="4" height="1"/><rect x="0" y="32" width="4" height="1"/><rect x="0" y="35" width="4" height="1"/><rect x="0" y="38" width="4" height="1"/><rect x="0" y="42" width="4" height="1"/><rect x="0" y="46" width="4" height="1"/><rect x="0" y="49" width="4" height="1"/><rect x="0" y="52" width="4" height="1"/><rect x="0" y="56" width="4" height="1"/><rect x="0" y="60" width="4" height="1"/><rect x="0" y="63" width="4" height="1"/><rect x="0" y="66" width="4" height="1"/><rect x="0" y="70" width="4" height="1"/></g>
<g id="thumb"><path d="M0.5 5.5 L5.5 0.5 H18 V10.5 H5.5 Z" fill="url(#thg)" stroke="#75807A"/><path d="M1.5 5.5 L6 1.5" stroke="#A0E8A0" stroke-width="1.2"/><path d="M1 6 L5.5 10.5" stroke="#4A5550" stroke-width="1"/><rect x="17" y="1" width="1" height="9.5" fill="#707078"/><rect x="18" y="0" width="2" height="11" fill="#2CC43C"/></g>
</defs></svg>

<!-- SATURATION -->
<div class="a" style="left:318px;top:542px;width:194px;height:62px;border:1px solid #BABAC2;border-radius:5px"></div>
<div class="t" style="left:326px;top:537px;padding:0 1px;background:#E1E1E6;color:#1F50A8;letter-spacing:-0.3px">Saturation shift</div>
<div class="a" style="left:375px;top:566px;width:71px;height:24px;background:#fff;border:1px solid #A8A8B0"></div>
<div class="t" style="left:377px;top:568px">20</div>
<div class="a" style="left:376px;top:586px;width:42px;height:3px;background:#ABABB4"></div>
<div class="a" style="left:418px;top:586px;width:27px;height:3px;background:#E2E2E8"></div>
<div class="a" style="left:433px;top:567px;width:12px;height:19px;background:#CCCCD6"></div>
<svg class="a" style="left:422px;top:568px" width="24" height="18"><use href="#spin"/></svg>

<!-- LIGHTNESS -->
<div class="a" style="left:540px;top:542px;width:194px;height:62px;border:1px solid #BABAC2;border-radius:5px"></div>
<div class="t" style="left:548px;top:537px;padding:0 1px;background:#E1E1E6;color:#1F50A8;letter-spacing:-0.3px">Lightness shift</div>
<div class="a" style="left:597px;top:566px;width:71px;height:24px;background:#fff;border:1px solid #A8A8B0"></div>
<div class="t" style="left:599px;top:568px">-15</div>
<div class="a" style="left:598px;top:586px;width:29px;height:3px;background:#ABABB4"></div>
<div class="a" style="left:627px;top:586px;width:40px;height:3px;background:#E2E2E8"></div>
<div class="a" style="left:655px;top:567px;width:12px;height:19px;background:#CCCCD6"></div>
<svg class="a" style="left:644px;top:568px" width="24" height="18"><use href="#spin"/></svg>

<svg width="0" height="0" style="position:absolute"><defs>
<g id="spin"><rect x="0.5" y="0.5" width="10" height="7" rx="1.5" fill="#F0F0F4" stroke="#9C9CA8"/><rect x="0.5" y="9.5" width="10" height="7" rx="1.5" fill="#F0F0F4" stroke="#9C9CA8"/><path d="M2.5 6 L5.5 2.5 L8.5 6Z M2.5 11 L5.5 14.5 L8.5 11Z" fill="#222"/><path d="M13 6 L17 10 L21 6" stroke="#111" stroke-width="2.2" fill="none"/></g>
</defs></svg>

<!-- BUTTONS -->
<div class="a btn" style="left:412px;top:628px;box-shadow:inset 0 -2px 0 #A0BCE8,inset 1px 0 0 #C8DAF4,inset -1px 0 0 #C8DAF4">OK</div>
<div class="a btn" style="left:493px;top:628px">Cancel</div>
<div class="a btn" style="left:575px;top:628px">Help</div>
<!-- size grip -->
<svg class="a" style="left:732px;top:645px" width="13" height="13"><path d="M12 2 L2 12 M12 6 L6 12 M12 10 L10 12" stroke="#9A9AA8" stroke-width="1"/><path d="M12 3 L3 12 M12 7 L7 12 M12 11 L11 12" stroke="#fff" stroke-width="1"/></svg>


</body></html>
